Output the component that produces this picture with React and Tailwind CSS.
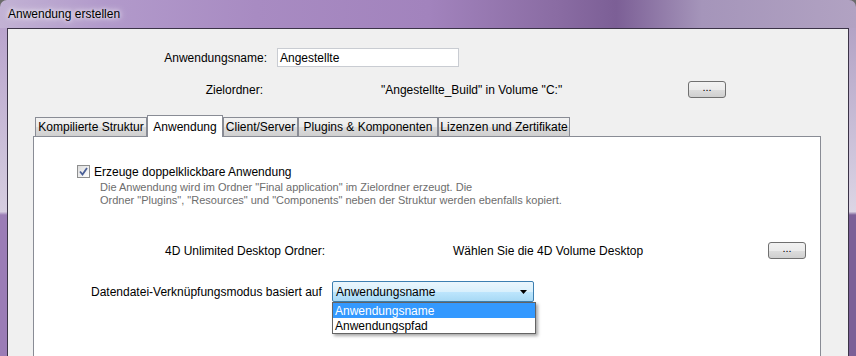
import React from 'react';

const tabs = [
  { label: 'Kompilierte Struktur', w: 'w-[112px]' },
  { label: 'Anwendung', w: 'w-[76px]', active: true },
  { label: 'Client/Server', w: 'w-[75px]' },
  { label: 'Plugins & Komponenten', w: 'w-[140px]' },
  { label: 'Lizenzen und Zertifikate', w: 'w-[132px]' },
];

const DotsButton = () => (
  <button className="w-[38px] h-[17px] rounded-[3px] border border-[#707070] bg-[linear-gradient(#f2f2f2_0%,#ebebeb_50%,#dddddd_51%,#cfcfcf_100%)] text-[11px] leading-[10px] text-black flex items-start justify-center">
    ...
  </button>
);

const Tab = ({ label, w, active }) =>
  active ? (
    <div
      className={`${w} h-[22px] -mb-[1px] relative z-10 bg-white border-t border-l border-r border-[#898c95] flex items-center justify-center whitespace-nowrap text-[12px]`}
    >
      {label}
    </div>
  ) : (
    <div
      className={`${w} h-[19px] border-t border-l border-r border-[#898c95] bg-[linear-gradient(#f2f2f2_0%,#ebebeb_50%,#dddddd_51%,#cfcfcf_100%)] flex items-center justify-center whitespace-nowrap text-[12px]`}
    >
      {label}
    </div>
  );

export default function App() {
  return (
    <div className="w-[856px] h-[356px] overflow-hidden bg-[#6b6b6b] font-['Liberation_Sans',Arial,sans-serif] text-black whitespace-nowrap">
      <div className="h-full flex flex-col rounded-t-[7px] overflow-hidden">
        {/* title bar */}
        <div className="h-[28px] shrink-0 flex items-center pl-[8px] bg-[linear-gradient(90deg,#c2b2d4_0%,#b29acb_12%,#a88bc2_30%,#a283bd_50%,#8a6ca3_65%,#7c5f96_72%,#a595ba_82%,#b1a2c2_100%)]">
          <span className="text-[12px] [text-shadow:0_0_8px_#ffffff,0_0_4px_#ffffff]">
            Anwendung erstellen
          </span>
        </div>

        <div className="flex-1 flex min-h-0">
          <div className="w-[7px] shrink-0 bg-[linear-gradient(#b9a4cd_0%,#cdc2da_40%,#d6cde0_56%,#9b7db6_57%,#9b7db6_100%)]" />

          <div className="flex-1 border-t border-l border-r border-[#3b3347] bg-[#f0f0f0] flex flex-col">
            {/* Anwendungsname */}
            <div className="mt-[19px] h-[19px] flex items-center text-[12px]">
              <div className="w-[259px] text-right">Anwendungsname:</div>
              <div className="ml-[10px] w-[182px] h-[19px] border border-[#c9ccd2] bg-white px-[2px] flex items-center">
                Angestellte
              </div>
            </div>

            {/* Zielordner */}
            <div className="mt-[14px] h-[17px] flex items-center text-[12px]">
              <div className="w-[255px] text-right">Zielordner:</div>
              <div className="w-[425px] pl-[118px]">
                "Angestellte_Build" in Volume "C:"
              </div>
              <DotsButton />
            </div>

            {/* tabs */}
            <div className="mt-[17px] ml-[25px] mr-[27px] flex-1 flex flex-col">
              <div className="h-[21px] flex items-end pl-[2px]">
                {tabs.map((t) => (
                  <Tab key={t.label} {...t} />
                ))}
              </div>
              <div className="flex-1 bg-white border-t border-l border-r border-[#898c95] flex flex-col">
                <div className="mt-[28px] ml-[43px] h-[13px] flex items-center text-[12px]">
                  <div className="w-[13px] h-[13px] border border-[#8e8f8f] bg-[linear-gradient(135deg,#dcdcdc,#ffffff)] flex items-center justify-center">
                    <svg width="9" height="9" viewBox="0 0 9 9">
                      <path d="M1 4.5 L3.5 7.5 L8 1" fill="none" stroke="#4a5f97" strokeWidth="1.8" />
                    </svg>
                  </div>
                  <span className="ml-[4px]">Erzeuge doppelklickbare Anwendung</span>
                </div>
                <div className="mt-[3px] ml-[66px] text-[11px] leading-[13px] text-[#6d6d6d]">
                  <div>Die Anwendung wird im Ordner "Final application" im Zielordner erzeugt. Die</div>
                  <div>Ordner "Plugins", "Resources" und "Components" neben der Struktur werden ebenfalls kopiert.</div>
                </div>

                <div className="mt-[35px] ml-[131px] h-[17px] flex items-center text-[12px]">
                  <div className="w-[288px]">4D Unlimited Desktop Ordner:</div>
                  <div className="w-[315px]">Wählen Sie die 4D Volume Desktop</div>
                  <DotsButton />
                </div>

                <div className="mt-[22px] ml-[57px] h-[21px] flex items-center text-[12px]">
                  <div className="w-[241px]">Datendatei-Verknüpfungsmodus basiert auf</div>
                  <div className="relative">
                    <div className="w-[202px] h-[21px] rounded-[2px] border border-[#3c7fb1] bg-[linear-gradient(#eaf6fd_0%,#d9f0fc_50%,#bee6fd_51%,#a7d9f5_100%)] flex items-center pl-[3px]">
                      <span className="flex-1">Anwendungsname</span>
                      <svg width="7" height="4" viewBox="0 0 7 4" className="mr-[6px]">
                        <path d="M0 0 H7 L3.5 4 Z" fill="#000" />
                      </svg>
                    </div>
                    <div className="absolute left-0 top-[21px] w-[204px] border border-[#646464] bg-white shadow-[2px_2px_3px_rgba(0,0,0,0.35)] z-20">
                      <div className="h-[15px] bg-[#3399ff] text-white pl-[2px] flex items-center">
                        Anwendungsname
                      </div>
                      <div className="h-[15px] pl-[2px] flex items-center">Anwendungspfad</div>
                    </div>
                  </div>
                </div>
              </div>
            </div>
          </div>

          <div className="w-[7px] shrink-0 bg-[linear-gradient(#b3a3c5_0%,#cfc6dc_40%,#dcd5e4_56%,#7b6097_57%,#7b6097_100%)]" />
        </div>
      </div>
    </div>
  );
}
